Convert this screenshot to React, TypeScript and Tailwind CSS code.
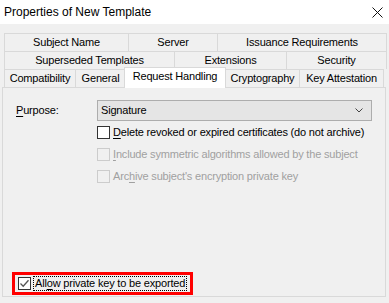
import React from 'react';

const tabRows: { label: string; w: string; active?: boolean }[][] = [
  [
    { label: 'Subject Name', w: 'w-[124px]' },
    { label: 'Server', w: 'w-[89px]' },
    { label: 'Issuance Requirements', w: 'w-[170px]' },
  ],
  [
    { label: 'Superseded Templates', w: 'w-[170px]' },
    { label: 'Extensions', w: 'w-[112px]' },
    { label: 'Security', w: 'w-[101px]' },
  ],
  [
    { label: 'Compatibility', w: 'w-[71px]' },
    { label: 'General', w: 'w-[50px]' },
    { label: 'Request Handling', w: 'w-[102px]', active: true },
    { label: 'Cryptography', w: 'w-[74px]' },
    { label: 'Key Attestation', w: 'w-[85px]' },
  ],
];

function Box({ checked, disabled }: { checked?: boolean; disabled?: boolean }) {
  return (
    <span
      className={`flex h-[13px] w-[13px] shrink-0 items-center justify-center border ${
        disabled ? 'border-[#cccccc] bg-[#f0f0f0]' : 'border-[#333333] bg-white'
      }`}
    >
      {checked && (
        <svg width="11" height="11" viewBox="0 0 11 11">
          <path d="M1.5 5.5 L4.2 8.2 L9.5 2.2" fill="none" stroke="#555" strokeWidth="1.3" />
        </svg>
      )}
    </span>
  );
}

export default function App() {
  return (
    <div className="h-[303px] w-[389px] overflow-hidden bg-[#f0f0f0] font-['Liberation_Sans',Arial,sans-serif] text-[11px] tracking-[-0.18px] text-black">
      <div className="flex h-[24px] items-center justify-between bg-white pl-[4px] pr-[5px]">
        <span className="text-[12px] tracking-normal">Properties of New Template</span>
        <svg width="11" height="11" viewBox="0 0 11 11" className="mr-[1px]">
          <path d="M0.5 0.5 L10.5 10.5 M10.5 0.5 L0.5 10.5" stroke="#111" strokeWidth="1" />
        </svg>
      </div>

      <div className="ml-[4px] mt-[9px]">
        {tabRows.map((row, i) => (
          <div key={i} className="flex h-[18px]">
            {row.map((t, j) => (
              <div
                key={t.label}
                className={`flex items-center justify-center whitespace-nowrap border-l border-t border-[#d9d9d9] ${t.w} ${
                  j === row.length - 1 ? 'border-r' : ''
                } ${
                  t.active
                    ? 'relative z-10 -mx-[1px] -mt-[2px] h-[21px] border-r bg-white pb-[3px]'
                    : 'h-[18px]'
                }`}
              >
                {t.label}
              </div>
            ))}
          </div>
        ))}
      </div>

      <div className="ml-[2px] flex h-[210px] w-[384px] flex-col border border-[#d9d9d9] pl-[13px] pt-[12px]">
        <div className="flex h-[21px] items-center">
          <span className="w-[81px]">
            <u className="underline-offset-2">P</u>urpose:
          </span>
          <div className="flex h-[21px] w-[275px] items-center justify-between border border-[#adadad] bg-[#e5e5e5] pl-[3px] pr-[8px]">
            <span>Signature</span>
            <svg width="8" height="5" viewBox="0 0 8 5">
              <path d="M0.5 0.5 L4 4 L7.5 0.5" fill="none" stroke="#444" strokeWidth="1" />
            </svg>
          </div>
        </div>

        <div className="ml-[81px] flex flex-col">
          <label className="flex h-[22px] items-center gap-[3px] whitespace-nowrap">
            <Box />
            <span>
              <u className="underline-offset-2">D</u>elete revoked or expired certificates (do not archive)
            </span>
          </label>
          <label className="flex h-[22px] items-center gap-[3px] whitespace-nowrap text-[#a0a0a0]">
            <Box disabled />
            <span>
              <u className="underline-offset-2">I</u>nclude symmetric algorithms allowed by the subject
            </span>
          </label>
          <label className="flex h-[22px] items-center gap-[3px] whitespace-nowrap text-[#a0a0a0]">
            <Box disabled />
            <span>
              Arc<u className="underline-offset-2">h</u>ive subject's encryption private key
            </span>
          </label>
        </div>

        <div className="mb-[1px] ml-[-4px] mt-auto flex h-[23px] w-[181px] items-center border-[3px] border-[#ff0000] pl-[3px]">
          <Box checked />
          <span className="ml-[2px] whitespace-nowrap border border-dotted border-black px-[1px] leading-[13px]">
            All<u className="underline-offset-2">o</u>w private key to be exported
          </span>
        </div>
      </div>
    </div>
  );
}
